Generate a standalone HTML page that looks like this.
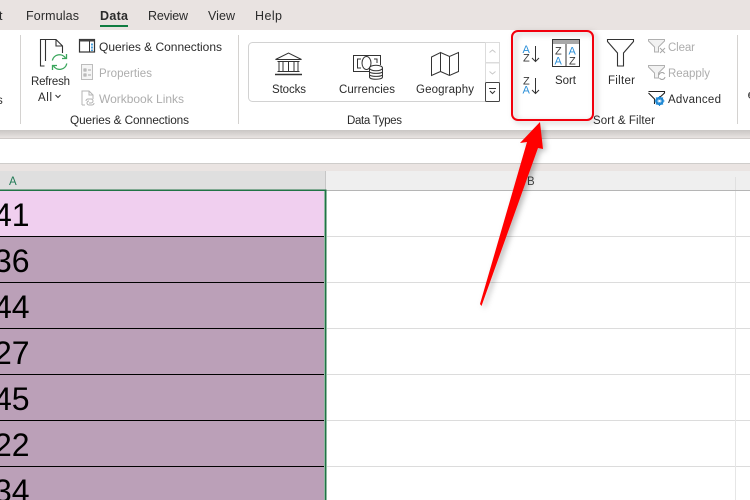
<!DOCTYPE html>
<html><head><meta charset="utf-8"><style>
html,body{margin:0;padding:0;width:750px;height:500px;overflow:hidden;background:#fff}
svg{display:block}
text{font-family:"Liberation Sans",sans-serif;font-size:11.5px;fill:#2b2b2b}
.g{fill:#adadad}
.az{font-size:11px;fill:#3a3a3a}
.bl{font-size:11px;fill:#2b8fd8}
</style></head><body>
<svg width="750" height="500" viewBox="0 0 750 500" xmlns="http://www.w3.org/2000/svg">
<defs>
<linearGradient id="sh" x1="0" y1="0" x2="0" y2="1"><stop offset="0" stop-color="#c9c6c4"/><stop offset="1" stop-color="#e8e3e1"/></linearGradient>
<filter id="ds" x="-30%" y="-30%" width="170%" height="170%"><feDropShadow dx="3" dy="2" stdDeviation="3" flood-color="#000" flood-opacity=".28"/></filter>
</defs>
<!-- tab strip -->
<rect width="750" height="30" fill="#e9e3e1"/>
<text x="-1" y="20" style="font-size:12.5px">t</text>
<text x="26" y="20" textLength="53" style="font-size:12.5px">Formulas</text>
<text x="100" y="20" textLength="28" style="font-size:12.5px;font-weight:bold" stroke="none">Data</text>
<rect x="100" y="25" width="28" height="2" fill="#107c41"/>
<text x="148" y="20" textLength="40" style="font-size:12.5px">Review</text>
<text x="208" y="20" textLength="27" style="font-size:12.5px">View</text>
<text x="255" y="20" textLength="27" style="font-size:12.5px">Help</text>
<!-- ribbon -->
<rect y="30" width="750" height="100" fill="#fff"/>
<rect y="130" width="750" height="8" fill="url(#sh)"/>
<rect y="138" width="750" height="1" fill="#cfcbc9"/>
<rect y="139" width="750" height="24" fill="#fff"/>
<rect y="163" width="750" height="1" fill="#cfcdcb"/>
<rect y="164" width="750" height="7" fill="#eae4e2"/>
<!-- separators -->
<g fill="#d4d2d0"><rect x="20" y="35" width="1" height="89"/><rect x="238" y="35" width="1" height="89"/><rect x="737" y="35" width="1" height="89"/></g>
<text x="-3" y="104">s</text>
<!-- Refresh -->
<g fill="none" stroke="#333" stroke-width="1.1">
<path d="M44.5 66H40.500V39.500H46"/>
<path d="M45.500 61V39.500H56L62.500 46V53M56 39.500V46H62.500"/>
</g>
<circle cx="59.500" cy="62" r="9" fill="#fff"/>
<g fill="none" stroke="#3aa65c" stroke-width="1.3">
<path d="M52.300 60.500A7.300 7.300 0 0 1 65.500 58M66.800 63.500A7.300 7.300 0 0 1 53.500 66"/>
<path d="M66.500 54V58.500H62M52.500 70V65.500H57"/>
</g>
<text x="31" y="85" textLength="39">Refresh</text>
<text x="38" y="101" textLength="14">All</text>
<path d="M55.500 95L58 97.500L60.500 95" fill="none" stroke="#333" stroke-width="1"/>
<!-- Queries icon -->
<rect x="79.500" y="39.500" width="15" height="12.500" fill="#fff" stroke="#333" stroke-width="1.2"/>
<rect x="79.500" y="39.500" width="15" height="2" fill="#444"/>
<path d="M89.500 41V52" stroke="#333"/>
<path d="M92 43.500v2M92 46.500v2M92 49.500v1.500" stroke="#1e88d4" stroke-width="1.600"/>
<text x="99" y="51" textLength="123" style="font-size:12px">Queries &amp; Connections</text>
<!-- Properties icon -->
<rect x="81.500" y="64.500" width="11" height="15" fill="#f5f5f5" stroke="#bdbdbd"/>
<path d="M84 69h2v2h-2zM84 74h2v2h-2zM88 70h3M88 75h3" fill="none" stroke="#a8a8a8"/>
<text x="99" y="77" textLength="53" class="g">Properties</text>
<!-- Workbook Links icon -->
<path d="M82 105V91H89L93 95V99M89 91V95H93M82 105H85" fill="none" stroke="#b5b5b5"/>
<path d="M86 101a2 2 0 0 1 2-2h3a2 2 0 0 1 0 4h-2M94 103a2 2 0 0 1-2 2h-3a2 2 0 0 1 0-4" fill="none" stroke="#b0b0b0"/>
<text x="99" y="103" textLength="85" class="g" style="font-size:12px">Workbook Links</text>
<text x="70" y="124" textLength="119" style="font-size:11.800px">Queries &amp; Connections</text>
<!-- Data types gallery -->
<rect x="248.500" y="42.500" width="251" height="59" rx="4" fill="#fff" stroke="#d2d2d2"/>
<rect x="485.500" y="42.500" width="14" height="20" fill="#fff" stroke="#dcdcdc"/>
<rect x="485.500" y="63" width="14" height="19.500" fill="#fff" stroke="#dcdcdc"/>
<rect x="485.500" y="82.500" width="14" height="19" rx="1" fill="#fff" stroke="#444"/>
<path d="M489.500 52.500L492.500 50L495.500 52.500M489.500 71.500L492.500 74L495.500 71.500" fill="none" stroke="#c8c8c8"/>
<path d="M489 88.500h7" stroke="#333"/><path d="M490 91l2.500 2.500L495 91" fill="none" stroke="#333"/>
<!-- stocks -->
<g fill="none" stroke="#333" stroke-width="1">
<path d="M275.500 59.500L288.500 53L301.500 59.500Z"/>
<path d="M277.500 61.500H299.500M279 62V71M283 62V71M288.500 62V71M294 62V71M298 62V71M277.500 71.500H299.500"/>
<path d="M275 74.500H302" stroke-width="1.500"/>
</g>
<text x="272" y="93" textLength="34">Stocks</text>
<!-- currencies -->
<g fill="none" stroke="#333" stroke-width="1">
<path d="M369 71.500H353.500V55.500H380.500V65"/>
<path d="M361 59H357.500V68H361M374 59H377V63"/>
<ellipse cx="366.500" cy="63" rx="4.500" ry="6.500"/>
</g>
<g fill="#fff" stroke="#333" stroke-width="1">
<path d="M369.500 68V77C369.500 80 382.500 80 382.500 77V68"/>
<ellipse cx="376" cy="68" rx="6.500" ry="2.800"/>
<path d="M369.500 71.500C369.500 74 382.500 74 382.500 71.500M369.500 74.500C369.500 77 382.500 77 382.500 74.500" fill="none"/>
</g>
<text x="339" y="93" textLength="56">Currencies</text>
<!-- geography -->
<path d="M431.500 57L440.500 52.500V71.500L431.500 75.500ZM440.500 52.500L449.500 56.500L458.500 52.500V71.500L449.500 75.500L440.500 71.500M449.500 56.500V75.500" fill="none" stroke="#333" stroke-width="1"/>
<text x="416" y="93" textLength="58">Geography</text>
<text x="347" y="124" textLength="55">Data Types</text>
<!-- sort icons -->
<text x="522.500" y="53" class="bl" textLength="8">A</text>
<text x="523" y="61.500" class="az" textLength="7">Z</text>
<text x="523" y="84.500" class="az" textLength="7">Z</text>
<text x="522.500" y="93.500" class="bl" textLength="8">A</text>
<path d="M535.500 46V61.500M532 58L535.500 61.500L539 58M535.500 78V93.500M532 90L535.500 93.500L539 90" fill="none" stroke="#333" stroke-width="1"/>
<rect x="552.500" y="39.500" width="27" height="27" fill="#fff" stroke="#333"/>
<rect x="553" y="40" width="26" height="4" fill="#a8a8a8"/>
<path d="M566 44V67" stroke="#333"/>
<text x="555" y="54.500" class="az" textLength="7.500">Z</text>
<text x="554.500" y="64.500" class="bl" textLength="8">A</text>
<text x="568.500" y="54.500" class="bl" textLength="8">A</text>
<text x="569" y="64.500" class="az" textLength="7.500">Z</text>
<text x="555" y="84" textLength="21">Sort</text>
<!-- filter -->
<path d="M607.500 39.500H633.500V41.500L623.500 53V66H617.500V53L607.500 41.500Z" fill="#fff" stroke="#333" stroke-width="1.100"/>
<text x="608" y="84" textLength="27">Filter</text>
<path d="M648.500 39.500H664.500V41L658.500 47V52H654.500V47L648.500 41Z" fill="#f2f2f2" stroke="#b0b0b0"/>
<path d="M660 48L665 53M665 48L660 53" stroke="#a8a8a8"/>
<text x="668" y="51" textLength="27" class="g">Clear</text>
<path d="M648.500 65.500H664.500V67L658.500 73V78H654.500V73L648.500 67Z" fill="#f2f2f2" stroke="#b0b0b0"/>
<path d="M659 75a3 3 0 0 1 5.500-1M665 77a3 3 0 0 1-5.500 1" fill="none" stroke="#a0a0a0"/>
<text x="668" y="77" textLength="42" class="g">Reapply</text>
<path d="M648.500 91.500H664.500V93L658.500 98.500M654.500 104V99L648.500 93" fill="none" stroke="#222" stroke-width="1.100"/>
<circle cx="659.500" cy="101" r="3.300" fill="none" stroke="#1e88d4" stroke-width="2"/>
<path d="M659.500 96v10M654.500 101h10M656 97.500l7 7M663 97.500l-7 7" stroke="#1e88d4" stroke-width="1"/>
<circle cx="659.500" cy="101" r="1.300" fill="#fff"/>
<text x="668" y="103" textLength="53">Advanced</text>
<text x="593" y="124" textLength="62">Sort &amp; Filter</text>
<path d="M750 92.500A3.500 3.500 0 0 0 750 98" fill="none" stroke="#444" stroke-width="1.200"/>
<path d="M748.500 95h1.500" stroke="#444"/>
<!-- column headers -->
<rect y="171" width="325" height="19" fill="#dfdfdf"/>
<rect x="326" y="171" width="424" height="19" fill="#efefef"/>
<rect x="325" y="171" width="1" height="19" fill="#c6c6c6"/>
<rect x="326" y="190" width="424" height="1" fill="#b5b5b5"/>
<rect x="735" y="177" width="1" height="13" fill="#e0e0e0"/>
<text x="9" y="185" style="font-size:11.500px;fill:#217a55" textLength="9">A</text>
<text x="527" y="185" style="font-size:11.500px;fill:#444" textLength="8">B</text>
<!-- grid right -->
<g fill="#dcdcdc">
<rect x="327" y="236" width="423" height="1"/><rect x="327" y="282" width="423" height="1"/><rect x="327" y="328" width="423" height="1"/><rect x="327" y="374" width="423" height="1"/><rect x="327" y="420" width="423" height="1"/><rect x="327" y="466" width="423" height="1"/>
<rect x="735" y="191" width="1" height="309" fill="#e6e6e6"/>
</g>
<!-- cells -->
<rect y="191" width="324" height="45" fill="#f0cfef"/>
<rect y="237" width="324" height="263" fill="#bba0b8"/>
<g fill="#000">
<rect y="236" width="324" height="1"/><rect y="282" width="324" height="1"/><rect y="328" width="324" height="1"/><rect y="374" width="324" height="1"/><rect y="420" width="324" height="1"/><rect y="466" width="324" height="1"/>
</g>
<rect y="189.500" width="326" height="1.500" fill="#217346"/>
<rect x="324.500" y="189.500" width="2" height="311" fill="#217346"/>
<text x="-6" y="226" style="font-size:32px;fill:#000">41</text>
<text x="-6" y="272" style="font-size:32px;fill:#000">36</text>
<text x="-6" y="318" style="font-size:32px;fill:#000">44</text>
<text x="-6" y="364" style="font-size:32px;fill:#000">27</text>
<text x="-6" y="410" style="font-size:32px;fill:#000">45</text>
<text x="-6" y="456" style="font-size:32px;fill:#000">22</text>
<text x="-6" y="502" style="font-size:32px;fill:#000">34</text>
<!-- annotation -->
<g filter="url(#ds)">
<rect x="512" y="31" width="81" height="89" rx="6" fill="none" stroke="#f2000a" stroke-width="2"/>
<path d="M540 122L520 143L527 142L480 304L481.500 306L538 148L543 149Z" fill="#ff0000"/>
</g>
</svg>
</body></html>
